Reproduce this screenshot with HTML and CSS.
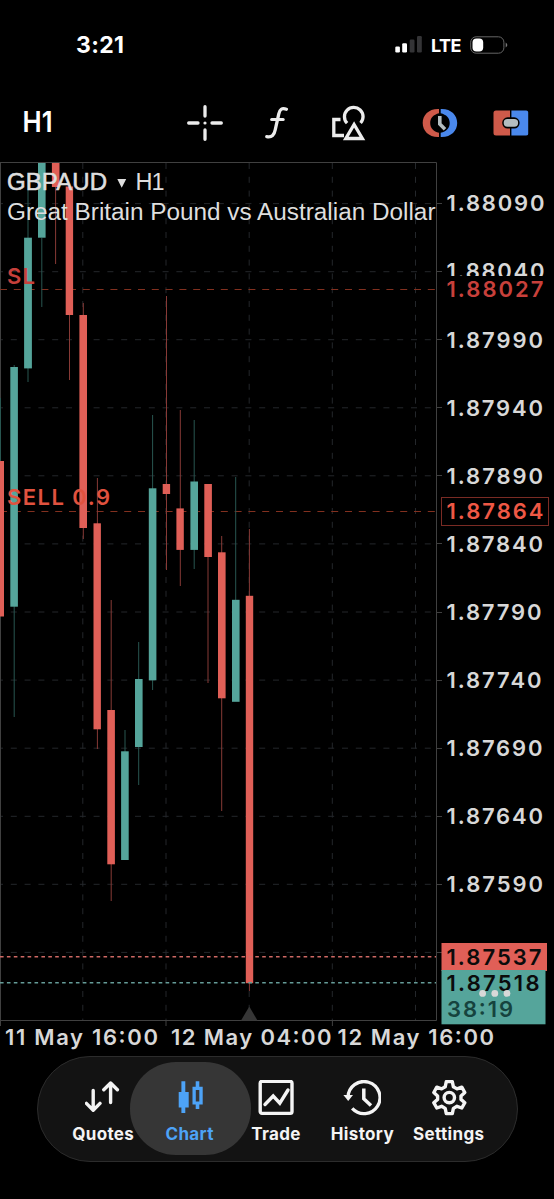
FILE: index.html
```html
<!DOCTYPE html>
<html lang="en">
<head>
<meta charset="utf-8">
<title>GBPAUD H1</title>
<link rel="stylesheet" href="styles.css">
</head>
<body>
<header class="status">
  <span class="time">3:21</span>
  <div class="status-right">
    <svg width="28" height="18" viewBox="0 0 28 18"><g fill="#fff"><rect x="0.3" y="10.5" width="4.6" height="6" rx="1.2"/><rect x="7.2" y="7.3" width="4.8" height="9.2" rx="1.2"/></g><g fill="#343436"><rect x="14.7" y="3.5" width="4.8" height="13" rx="1.2"/><rect x="22" y="0" width="4.8" height="16.5" rx="1.2"/></g></svg>
    <span class="lte">LTE</span>
    <svg width="39" height="18" viewBox="0 0 39 18"><rect x=".7" y=".8" width="33.2" height="16.4" rx="5.4" fill="none" stroke="#666" stroke-width="1"/><rect x="2.5" y="2.5" width="10.7" height="13" rx="4" fill="#fff"/><path d="M35.7 6.5Q39 9 35.7 11.5Z" fill="#777"/></svg>
  </div>
</header>
<div class="toolbar">
  <svg class="tf" width="32" height="36" viewBox="0 0 32 36"><text x="0.6" y="27.3" textLength="30" lengthAdjust="spacingAndGlyphs" class="tf-text">H1</text></svg>
  <svg class="cross" width="36" height="36" viewBox="0 0 36 36"><g stroke="#ececec" stroke-width="3.3" stroke-linecap="round"><path d="M18 1.7V11M18 25V34.3M1.7 18H11M25 18H34.3"/></g><circle cx="18" cy="18" r="1.6" fill="#ececec"/></svg>
  <svg class="fx" width="24" height="36" viewBox="0 0 24 36"><g fill="none" stroke="#ececec" stroke-width="3.3" stroke-linecap="round"><path d="M21.4 4.2C16.8 2.6 14.8 4.4 13.8 8.8L10.3 24.5C9.3 30 6.8 32.6 1.8 31.6"/><path d="M6.6 14.4H18.2" stroke-width="3"/></g></svg>
  <svg class="shapes" width="34" height="36" viewBox="0 0 34 36"><g fill="none" stroke="#ececec" stroke-width="3.3"><path d="M15.1 18.2A9.3 9.3 0 1 1 28.6 18"/><path d="M8.5 14.5H1.8V30.5H12"/><path d="M22.1 19.5L30.4 33.5H13.8Z"/></g></svg>
  <svg class="clock" width="36" height="30" viewBox="0 0 36 30"><path d="M17 1C7 .5 .7 7 .7 15S7 29.5 17 29V24.8C11.5 23.5 8.2 20 8.2 15S11.5 6.5 17 5.2Z" fill="#cf5a4a"/><path d="M18.7 1C28.8 .5 35.2 7 35.2 15S28.8 29.5 18.7 29V24.8C24.4 23.5 27.7 20 27.7 15S24.4 6.5 18.7 5.2Z" fill="#4a88ec"/><path d="M17.8 8V16.1L23 21.2" fill="none" stroke="#b4bdc0" stroke-width="3.6"/></svg>
  <svg class="trade-panel" width="36" height="26" viewBox="0 0 36 26"><path d="M3 .5H17V25.5H3A2.5 2.5 0 0 1 .5 23V3A2.5 2.5 0 0 1 3 .5Z" fill="#cf5a4a"/><path d="M18.4 .5H33A2.2 2.2 0 0 1 35.2 3V23A2.2 2.2 0 0 1 33 25.5H18.4Z" fill="#4a88ec"/><rect x="9.2" y="7.3" width="17.4" height="11.2" rx="5.4" fill="#000"/><rect x="10.7" y="9" width="14.4" height="7.8" rx="3.7" fill="#b4bdc0"/></svg>
</div>

<main>
<svg class="chart" width="554" height="896" viewBox="0 160 554 896">
  <g class="grid">
    <path d="M0 203.6H436M0 271.7H436M0 339.7H436M0 407.8H436M0 475.8H436M0 543.9H436M0 612H436M0 680.1H436M0 748.2H436M0 816.3H436M0 884.3H436M0 952.4H436" stroke-dashoffset="3"/>
    <path d="M82.8 163V1020M166 163V1020M249.2 163V1020M332.3 163V1020M415.5 163V1020"/>
  </g>
  <g class="axis">
    <path d="M0 162.5H436.5V1020.5H0M.5 162V1026M166 1020V1026M332.4 1020V1026"/>
    <path d="M437 203.5h5M437 271.5h5M437 339.5h5M437 407.5h5M437 475.5h5M437 543.5h5M437 612.5h5M437 680.5h5M437 748.5h5M437 816.5h5M437 884.5h5M437 952.5h5"/>
  </g>
  <path class="order" d="M0 289.5H436M0 511.5H436"/>

  <g class="wick up"><path d="M.5 398V461M14.2 365V717M28 190V382M41.8 238V307M125 730V752M138.7 642V785M152.6 415V690M194.2 420V569M235.7 477V600"/></g>
  <g class="wick down"><path d="M55.6 187V264M69.5 315V380M83.3 303V539M97.4 478V749M111.2 600V901M166.5 296V570M180.3 410V586M208 557V683M221.7 536V811M249.4 529V991"/></g>
  <g fill="#55a59b">
    <rect x="10.3" y="367" width="7.6" height="239.7"/><rect x="24.1" y="237.7" width="7.8" height="130.7"/><rect x="38" y="163" width="7.6" height="74.7"/><rect x="121.1" y="751.3" width="7.6" height="108.7"/><rect x="135" y="679" width="7.6" height="68"/><rect x="148.8" y="488.3" width="7.6" height="192"/><rect x="190.4" y="481.5" width="7.6" height="68.4"/><rect x="232" y="599.8" width="7.6" height="102"/>
  </g>
  <g fill="#e05f57">
    <rect x="0" y="461" width="4" height="155.5"/><rect x="51.9" y="163" width="7.6" height="24"/><rect x="65.7" y="186.5" width="7.4" height="128.5"/><rect x="79.4" y="315" width="7.6" height="213"/><rect x="93.5" y="523.3" width="7.4" height="206"/><rect x="107.3" y="710" width="7.6" height="154.3"/><rect x="162.7" y="484" width="7.4" height="10"/><rect x="176.4" y="508.4" width="7.4" height="41.5"/><rect x="204.3" y="484" width="7.6" height="73"/><rect x="218" y="552.3" width="7.6" height="146"/><rect x="245.8" y="595.8" width="7.4" height="387.4"/>
  </g>
  <path d="M0 956.8H436" class="dots ask"/>
  <path d="M0 982.8H436" class="dots bid"/>
  <path d="M249.3 1006.5L257.5 1020.5H241Z" fill="#363636"/>

  <g class="heading">
    <text class="symbol" x="7" y="190" textLength="100">GBPAUD</text>
    <path d="M117.3 179H126.2L121.7 187.7Z"/>
    <text x="135.6" y="190" textLength="29">H1</text>
    <text x="7" y="219.6" textLength="428.5" lengthAdjust="spacingAndGlyphs">Great Britain Pound vs Australian Dollar</text>
  </g>
  <g class="order-label">
    <text x="7" y="283.6" textLength="28" class="sl">SL</text>
    <text x="7" y="505.3" textLength="103">SELL 0.9</text>
  </g>

  <g class="price">
    <text x="446.5" y="211.2" textLength="98">1.88090</text>
    <text x="446.5" y="279.2" textLength="98">1.88040</text>
    <rect x="440" y="276" width="110" height="26" fill="#000"/>
    <text x="446.5" y="297.2" textLength="97" class="sl">1.88027</text>
    <text x="446.5" y="347.5" textLength="96.5">1.87990</text>
    <text x="446.5" y="415.6" textLength="96.5">1.87940</text>
    <text x="446.5" y="483.7" textLength="96.5">1.87890</text>
    <rect x="441.5" y="497.5" width="107" height="28" fill="#000" stroke="#7a2b24"/>
    <text x="446.5" y="519.2" textLength="97" class="sell">1.87864</text>
    <text x="446.5" y="551.8" textLength="96.5">1.87840</text>
    <text x="446.5" y="619.9" textLength="95">1.87790</text>
    <text x="446.5" y="688" textLength="95">1.87740</text>
    <text x="446.5" y="756.1" textLength="96">1.87690</text>
    <text x="446.5" y="824.3" textLength="96.5">1.87640</text>
    <text x="446.5" y="892.3" textLength="96.5">1.87590</text>
    <rect x="441.5" y="943" width="105.5" height="28" fill="#e05f57"/>
    <rect x="441.5" y="970" width="104" height="54.3" fill="#55a59b"/>
    <text x="446.5" y="964.8" textLength="95" class="dark">1.87537</text>
    <text x="446.5" y="990.8" textLength="93" class="dark">1.87518</text>
    <text x="447" y="1016.5" textLength="66" class="timer">38:19</text>
    <circle cx="482.6" cy="993.4" r="3.4"/><circle cx="494.8" cy="993.4" r="3.4"/><circle cx="507" cy="993.4" r="3.4"/>
  </g>
  <g class="date">
    <text x="5" y="1045.2" textLength="153">11 May 16:00</text>
    <text x="171" y="1045.2" textLength="160.5">12 May 04:00</text>
    <text x="337.5" y="1045.2" textLength="156.5">12 May 16:00</text>
  </g>
</svg>
</main>

<nav class="tabs">
  <a class="tab">
    <svg width="36" height="36" viewBox="0 0 36 36"><path d="M8.2 10.5V30M1.4 23.4L8.2 30.2L15 23.4M25.6 22.5V3M18.8 9.8L25.6 3L32.4 9.8" fill="none" stroke="#f4f4f4" stroke-width="3.4" stroke-linecap="round" stroke-linejoin="round"/></svg>
    <span>Quotes</span>
  </a>
  <a class="tab active">
    <svg width="36" height="36" viewBox="0 0 36 36"><g fill="#4da3f7"><path d="M6.7 12H9.4V1.3H13.3V12H16.7V27.5H13.3V33H9.4V27.5H6.7Z"/><path fill-rule="evenodd" d="M20.5 6.8H23.7V1.3H27.3V6.8H30.7V24.6H27.3V29H23.7V24.6H20.5ZM23.8 10V21.4H27.3V10Z"/></g></svg>
    <span>Chart</span>
  </a>
  <a class="tab">
    <svg width="36" height="36" viewBox="0 0 36 36"><g fill="none" stroke="#f4f4f4" stroke-width="3.4"><rect x="2.2" y="1.4" width="31.8" height="32" rx="1.8"/><path d="M7 24.5L15.2 16L21.8 23.2L30 10" stroke-linecap="round"/></g></svg>
    <span>Trade</span>
  </a>
  <a class="tab">
    <svg width="38" height="36" viewBox="0 0 38 36"><g fill="none" stroke="#f4f4f4" stroke-width="3.3"><path d="M5 17.3A16 16 0 1 1 9.2 28.4"/><path d="M20.8 8.5V18.8L28 25.5" stroke-width="3.5"/></g><path d="M.4 15H10L5.2 20.9Z" fill="#f4f4f4"/></svg>
    <span>History</span>
  </a>
  <a class="tab">
    <svg width="36" height="36" viewBox="0 0 36 36"><g fill="none" stroke="#f4f4f4" stroke-width="3.4" stroke-linejoin="round"><path d="M15.3 1.6H21.3L22.4 6.8L26 8.9L30.8 7.2L33.8 12.5L30 15.9V19.4L33.8 22.7L30.8 28L26 26.3L22.4 28.4L21.3 33.6H15.3L14.2 28.4L10.6 26.3L5.8 28L2.8 22.7L6.6 19.4V15.9L2.8 12.5L5.8 7.2L10.6 8.9L14.2 6.8Z"/><circle cx="18.3" cy="17.6" r="5.2"/></g></svg>
    <span>Settings</span>
  </a>
</nav>
</body>
</html>
```
FILE: styles.css
```css
* { box-sizing: border-box; }
body {
  margin: 0;
  width: 554px;
  height: 1199px;
  overflow: hidden;
  background: #000;
  color: #fff;
  font-family: Inter, "Liberation Sans", sans-serif;
}
svg { display: block; flex: none; }

.status {
  height: 90px;
  padding: 0 45px 0 76px;
  display: flex;
  align-items: center;
  justify-content: space-between;
}
.time { font-size: 23px; font-weight: 700; letter-spacing: .3px; }
.status-right { display: flex; align-items: center; gap: 8px; }
.lte { font-size: 18px; font-weight: 700; letter-spacing: -.5px; width: 31px; }

.toolbar {
  height: 70px;
  padding: 0 25px 5px 22px;
  display: flex;
  align-items: center;
}
.tf-text { font: 600 29px Inter, sans-serif; fill: #fff; }
.cross { margin-left: 133px; }
.fx { margin-left: 42px; }
.shapes { margin-left: 43px; }
.clock { margin-left: 56px; }
.trade-panel { margin-left: 35px; }

.grid path { fill: none; stroke: #24272b; stroke-width: 1; stroke-dasharray: 6 7.8; }
.axis path { fill: none; stroke: #404040; stroke-width: 1; }
.order { fill: none; stroke: #82301f; stroke-width: 1.2; stroke-dasharray: 7 6.8; }
.wick path { fill: none; stroke-width: 1; }
.wick.up path { stroke: #285650; }
.wick.down path { stroke: #873a36; }
.dots { fill: none; stroke-width: 1.5; stroke-dasharray: 3.6 3.3; }
.ask { stroke: #cf6964; }
.bid { stroke: #659c98; }

.heading { font: 23.5px "Liberation Sans", Arial, sans-serif; fill: #dedede; }
.heading .symbol { stroke: #dedede; stroke-width: .6; font-size: 24px; }
.order-label { font: 600 22px Inter, sans-serif; fill: #e0523f; }
.price, .date { font: 600 22px Inter, sans-serif; fill: #d8d8d8; }
.price .sl, .order-label .sl { fill: #c8403b; }
.price .sell { fill: #ef5845; }
.price .dark { fill: #0b0b0b; }
.price .timer { fill: #16433e; }

.tabs {
  width: 481px;
  height: 106px;
  margin-left: 36.5px;
  padding: 5px 23px 0;
  display: grid;
  grid-template-columns: repeat(5, 86.4px);
  justify-content: center;
  background: #131313;
  border: 1.5px solid #2c2c2c;
  border-radius: 53px;
}
.tab {
  height: 93px;
  padding-top: 17.5px;
  display: flex;
  flex-direction: column;
  align-items: center;
  gap: 7px;
  color: #f4f4f4;
  font-size: 17px;
  line-height: 22px;
  font-weight: 700;
  letter-spacing: .35px;
  white-space: nowrap;
}
.tab svg, .tab span { position: relative; z-index: 1; left: -1px; }
.tab.active {
  margin: 0 -17px;
  border-radius: 46px;
  background: #363636;
  color: #4da3f7;
}
```
